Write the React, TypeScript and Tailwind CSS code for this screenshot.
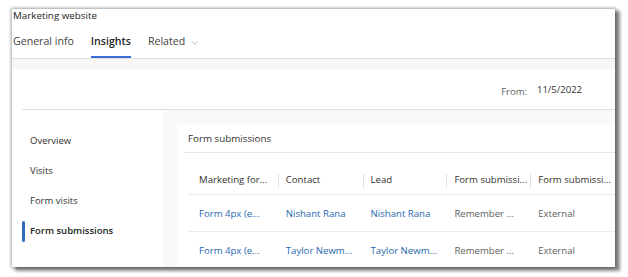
import { ChevronDown } from 'lucide-react'

const font = { fontFamily: '"Open Sans", "Noto Sans", sans-serif' }

const navItems = ['Overview', 'Visits', 'Form visits', 'Form submissions']

const columns = ['Marketing for...', 'Contact', 'Lead', 'Form submissi...', 'Form submissi...']
const colWidths = ['w-[92px] pl-[11px]', 'w-[86px] pl-[7px]', 'w-[85px] pl-[7px]', 'w-[85px] pl-[7px]', 'w-[85px] pl-[7px]']

const rows = [
  ['Form 4px (e...', 'Nishant Rana', 'Nishant Rana', 'Remember ...', 'External'],
  ['Form 4px (e...', 'Taylor Newm...', 'Taylor Newm...', 'Remember ...', 'External'],
]

export default function App() {
  return (
    <div className="w-[628px] h-[277px] bg-white overflow-hidden pt-[9px] pl-[12px]" style={font}>
      <div className="w-[603px] h-[258px] bg-white flex flex-col overflow-hidden shadow-[0_0_3px_1px_rgba(0,0,0,0.35),4px_3px_3px_1px_rgba(0,0,0,0.45)]">
        {/* Header */}
        <div className="h-[14px] shrink-0 pl-[1px] text-[9.8px] leading-[14px] text-[#242424]">Marketing website</div>

        {/* Tabs */}
        <div className="h-[36px] shrink-0 flex items-end gap-[17px] pl-[1px] text-[10.6px] text-[#424242] border-b border-[#e1dfdd]">
          <div className="h-[24px] flex items-start">General info</div>
          <div className="h-[24px] flex items-start font-semibold text-[#242424] border-b-2 border-[#3b6fd6]">Insights</div>
          <div className="h-[24px] flex items-start gap-[5px]">
            Related
            <ChevronDown className="w-[10px] h-[10px] mt-[4px] text-[#8a8886]" strokeWidth={1.5} />
          </div>
        </div>
        <div className="h-[10px] bg-[#f7f6f5] shrink-0" />

        {/* From */}
        <div className="h-[41px] shrink-0 flex items-center justify-end pr-[33px] gap-[10px] text-[#605e5c] border-b border-[#e1dfdd] ml-[10px]">
          <span className="text-[9.5px] mt-[6px]">From:</span>
          <span className="text-[9.5px] text-[#323130] mt-[3px]">11/5/2022</span>
        </div>

        {/* Body */}
        <div className="flex-1 flex min-h-0">
          <nav className="w-[151px] shrink-0 pt-[16px] pl-[10px]">
            {navItems.map((item) => {
              const active = item === 'Form submissions'
              return (
                <div key={item} className="h-[30px] flex items-center">
                  <div className={`w-[3px] h-[21px] rounded-sm ${active ? 'bg-[#2f6bb8]' : 'bg-transparent'}`} />
                  <span className={`ml-[5px] text-[9.5px] ${active ? 'font-semibold text-[#201f1e]' : 'text-[#323130]'}`}>{item}</span>
                </div>
              )
            })}
          </nav>

          <div className="flex-1 bg-[#faf9f8] pt-[14px] pl-[14px] min-w-0">
            <div className="bg-white h-full">
              <div className="h-[28px] flex items-center pl-[11px] pt-[2px] text-[9.8px] text-[#323130]">Form submissions</div>
              <div className="h-px bg-[#e8e6e4] ml-[7px]" />

              <div className="ml-[11px]">
                <div className="h-[42px] pt-[14px] flex border-b border-[#edebe9]">
                  {columns.map((col, i) => (
                    <div key={i} className={`flex items-center ${colWidths[i]}`}>
                      <span className="text-[9.6px] text-[#323130] whitespace-nowrap">{col}</span>
                      {i < columns.length - 1 && <div className="ml-auto w-px h-[14px] bg-[#e1dfdd]" />}
                    </div>
                  ))}
                </div>
                {rows.map((row, r) => (
                  <div key={r} className={`h-[37px] flex ${r === 0 ? 'border-b border-[#edebe9]' : ''}`}>
                    {row.map((cell, i) => (
                      <div
                        key={i}
                        className={`flex items-center pt-[2px] text-[9.6px] whitespace-nowrap ${colWidths[i]} ${i < 3 ? 'text-[#1f67b0]' : 'text-[#605e5c]'}`}
                      >
                        {cell}
                      </div>
                    ))}
                  </div>
                ))}
              </div>
            </div>
          </div>
        </div>
      </div>
    </div>
  )
}
